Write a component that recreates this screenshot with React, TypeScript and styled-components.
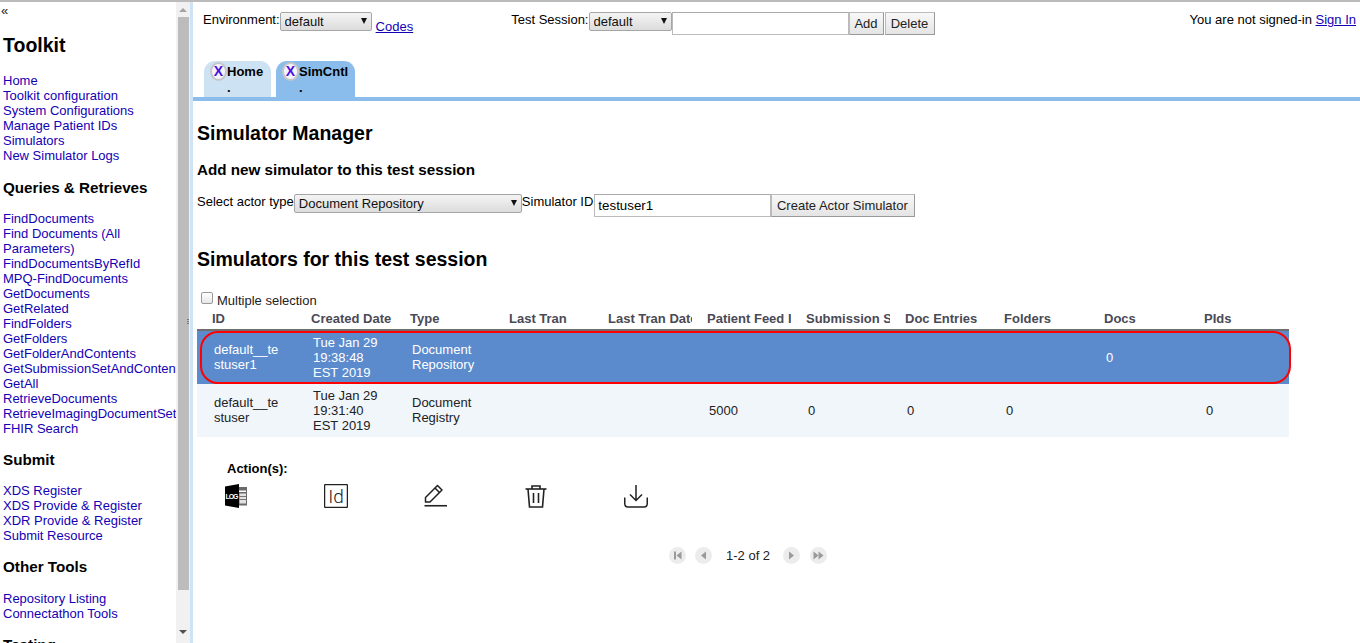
import React from "react";
import styled, { createGlobalStyle } from "styled-components";

const Global = createGlobalStyle`
  html, body { margin: 0; padding: 0; height: 100%; overflow: hidden; background: #fff; }
  body { font-family: "Liberation Sans", Arial, sans-serif; font-size: 13px; color: #000; }
  #root { height: 643px; }
`;

const Page = styled.div`
  display: flex;
  height: 643px;
  overflow: hidden;
  border-top: 2px solid #bbb;
  box-sizing: border-box;
`;

const Sidebar = styled.nav`
  width: 176px;
  flex: none;
  overflow: hidden;
  line-height: 15px;
`;

const Collapse = styled.div`
  height: 15px;
  margin-top: 1px;
  padding-left: 1px;
  font-size: 13px;
  line-height: 15px;
  color: #222;
`;

const SideTitle = styled.h2`
  margin: 16px 0 0 3px;
  font-size: 19.5px;
  line-height: 23px;
  font-weight: bold;
`;

const SideHeading = styled.h3<{ $top: number; $bottom: number }>`
  margin: ${(p) => p.$top}px 0 ${(p) => p.$bottom}px 3px;
  font-size: 15.21px;
  line-height: 17px;
  font-weight: bold;
`;

const SideList = styled.div<{ $first?: boolean }>`
  margin-top: ${(p) => (p.$first ? "16px" : "0")};
  padding-left: 3px;
  display: flex;
  flex-direction: column;
`;

const SideLink = styled.a`
  color: #1400b4;
  text-decoration: none;
  display: block;
`;

const ScrollTrack = styled.div`
  width: 14px;
  flex: none;
  background: #f1f1f1;
  display: flex;
  flex-direction: column;
  align-items: center;
`;

const ScrollUp = styled.div`
  width: 0;
  height: 0;
  margin-top: 6px;
  border-left: 4px solid transparent;
  border-right: 4px solid transparent;
  border-bottom: 4px solid #a3a3a3;
`;

const ScrollThumb = styled.div`
  width: 11px;
  height: 573px;
  margin-top: 5px;
  background: #bcbcbc;
`;

const ScrollDown = styled.div`
  width: 0;
  height: 0;
  margin-top: 40px;
  border-left: 4px solid transparent;
  border-right: 4px solid transparent;
  border-top: 4px solid #505050;
`;

const Splitter = styled.div`
  position: relative;
  width: 3px;
  flex: none;
  background: #cfe3f5;
`;

const Grip = styled.span`
  position: absolute;
  left: -3px;
  top: 317px;
  width: 2px;
  height: 6px;
  background: repeating-linear-gradient(#777 0 1px, transparent 1px 2px);
`;

const Main = styled.main`
  flex: 1;
  min-width: 0;
`;

const Toolbar = styled.div`
  display: flex;
  align-items: flex-start;
  height: 59px;
  padding: 10px 4px 0 10px;
  box-sizing: border-box;
`;

const ToolGroup = styled.div<{ $left?: number }>`
  display: flex;
  align-items: flex-start;
  margin-left: ${(p) => p.$left ?? 0}px;
`;

const UserGroup = styled.div`
  display: flex;
  align-items: flex-start;
  margin-left: auto;
`;

const Label = styled.span`
  line-height: 15px;
  white-space: nowrap;
`;

const SelectWrap = styled.div<{ $w: number }>`
  position: relative;
  width: ${(p) => p.$w}px;
  height: 19px;
  flex: none;
  &::after {
    content: "";
    position: absolute;
    right: 5px;
    top: 6px;
    border-left: 3.5px solid transparent;
    border-right: 3.5px solid transparent;
    border-top: 6px solid #111;
  }
`;

const Select = styled.select`
  appearance: none;
  width: 100%;
  height: 19px;
  margin: 0;
  padding: 0 0 0 4px;
  box-sizing: border-box;
  border: 1px solid #a6a6a6;
  border-radius: 2px;
  background: linear-gradient(#f4f4f4, #dcdcdc);
  font: 13px "Liberation Sans", Arial, sans-serif;
  color: #111;
`;

const CodesLink = styled.a`
  margin: 7px 0 0 4px;
  line-height: 15px;
  color: #1400b4;
  text-decoration: underline;
`;

const SignIn = styled.a`
  margin-left: 3.6px;
  color: #1400b4;
  text-decoration: underline;
  line-height: 15px;
`;

const TextInput = styled.input<{ $w: number; $gap?: number }>`
  width: ${(p) => p.$w}px;
  height: 23px;
  box-sizing: border-box;
  margin: 0 0 0 ${(p) => p.$gap ?? 0}px;
  padding: 1px 3px;
  border: 1px solid #bbb;
  border-top-color: #aaa;
  font: 13.33px "Liberation Sans", Arial, sans-serif;
  flex: none;
`;

const Btn = styled.button<{ $w: number; $gap?: number; $nudge?: number }>`
  width: ${(p) => p.$w}px;
  height: 23px;
  margin: 0 0 0 ${(p) => p.$gap ?? 0}px;
  padding: 0 ${(p) => p.$nudge ?? 0}px 0 0;
  flex: none;
  box-sizing: border-box;
  border: 1px solid #bbb;
  border-right-color: #999;
  border-bottom-color: #999;
  background: linear-gradient(#f8f8f8, #e4e4e4);
  font: 13px "Liberation Sans", Arial, sans-serif;
  color: #222;
`;

const TabBar = styled.div`
  display: flex;
  gap: 5px;
  height: 36px;
  padding-left: 11px;
  border-bottom: 4px solid #8bbdec;
`;

const Tab = styled.div<{ $active?: boolean; $w: number }>`
  width: ${(p) => p.$w}px;
  height: 36px;
  box-sizing: border-box;
  padding: 1px 0 0 6px;
  background: ${(p) => (p.$active ? "#8bbdec" : "#cde3f4")};
  border-radius: 11px 11px 0 0;
  font-weight: bold;
  line-height: 15px;
`;

const TabHead = styled.div`
  display: flex;
  align-items: flex-start;
  height: 19px;
`;

const TabClose = styled.span`
  width: 17px;
  height: 19px;
  flex: none;
  box-sizing: border-box;
  display: flex;
  align-items: center;
  justify-content: center;
  border: 2px solid #c6c6c6;
  border-radius: 50%;
  background: #f4f4fc;
  color: #4a10e0;
  font-size: 14px;
  font-weight: bold;
`;

const TabLabel = styled.span`
  margin-top: 2px;
`;

const TabDot = styled.div`
  margin-top: -1px;
  padding-left: 17px;
  line-height: 15px;
`;

const Content = styled.section`
  padding-left: 4px;
`;

const PageTitle = styled.h2`
  margin: 21px 0 0;
  font-size: 19.5px;
  line-height: 23px;
  font-weight: bold;
`;

const SubTitle = styled.h3`
  margin: 16px 0 0;
  font-size: 15.21px;
  line-height: 17px;
  font-weight: bold;
`;

const CreateRow = styled.div`
  display: flex;
  align-items: flex-start;
  margin-top: 16px;
`;

const SectionTitle = styled.h2`
  margin: 31px 0 0;
  font-size: 19.5px;
  line-height: 23px;
  font-weight: bold;
`;

const CheckRow = styled.label`
  display: flex;
  align-items: flex-start;
  margin-top: 21px;
  padding-left: 4px;
  height: 18px;
  color: #222;
  line-height: 15px;
`;

const Check = styled.span`
  width: 12px;
  height: 12px;
  flex: none;
  margin: 0 4px 0 0;
  box-sizing: border-box;
  border: 1px solid #999;
  border-radius: 2px;
  background: linear-gradient(#fff, #e6e6e6);
`;

const CheckText = styled.span`
  margin-top: 1px;
`;

const Table = styled.div`
  width: 1092px;
`;

const HeadRow = styled.div`
  display: grid;
  grid-template-columns: repeat(8, 99px) repeat(3, 100px);
  height: 19px;
`;

const HeadCell = styled.div`
  padding: 1px 0 0 15px;
  font-weight: bold;
  color: #4a4a55;
  line-height: 15px;
  white-space: nowrap;
  overflow: hidden;
`;

const Row = styled.div<{ $selected?: boolean }>`
  position: relative;
  display: grid;
  grid-template-columns: repeat(8, 99px) repeat(3, 100px);
  align-items: center;
  height: ${(p) => (p.$selected ? "55px" : "53px")};
  box-sizing: border-box;
  background: ${(p) => (p.$selected ? "#5b8bcd" : "#f1f6fb")};
  border-top: ${(p) => (p.$selected ? "2px solid #6f6f6f" : "0")};
  color: ${(p) => (p.$selected ? "#fff" : "#222")};
`;

const Cell = styled.div`
  padding: 0 16px 0 17px;
  line-height: 15px;
  overflow-wrap: anywhere;
  min-width: 0;
  &:nth-child(1), &:nth-child(3) {
    margin-bottom: 1px;
  }
`;

const Highlight = styled.span`
  position: absolute;
  left: 3px;
  right: -2px;
  top: 0;
  bottom: 0;
  box-sizing: border-box;
  border: 2px solid #f00;
  border-radius: 18px;
  pointer-events: none;
`;

const ActionsTitle = styled.div`
  margin: 24px 0 0 30px;
  font-weight: bold;
  line-height: 15px;
`;

const ActionIcons = styled.div`
  display: flex;
  gap: 76px;
  margin: 8px 0 0 27px;
`;

const IconBox = styled.svg`
  width: 24px;
  height: 24px;
  flex: none;
  display: block;
`;

const Pager = styled.div`
  display: flex;
  align-items: center;
  margin: 39px 0 0 472px;
  height: 17px;
`;

const PagerBtn = styled.span<{ $gap: number }>`
  width: 17px;
  height: 17px;
  flex: none;
  margin-left: ${(p) => p.$gap}px;
  display: flex;
  align-items: center;
  justify-content: center;
  border-radius: 50%;
  background: #ececec;
  color: #9a9a9a;
`;

const PagerText = styled.span`
  margin-left: 14px;
  color: #222;
`;

const sections = [
  { h: "Queries & Retrieves", top: 16, bottom: 15, items: ["FindDocuments", "Find Documents (All Parameters)", "FindDocumentsByRefId", "MPQ-FindDocuments", "GetDocuments", "GetRelated", "FindFolders", "GetFolders", "GetFolderAndContents", "GetSubmissionSetAndContents", "GetAll", "RetrieveDocuments", "RetrieveImagingDocumentSet", "FHIR Search"] },
  { h: "Submit", top: 15, bottom: 15, items: ["XDS Register", "XDS Provide & Register", "XDR Provide & Register", "Submit Resource"] },
  { h: "Other Tools", top: 15, bottom: 16, items: ["Repository Listing", "Connectathon Tools"] },
  { h: "Testing", top: 15, bottom: 15, items: [] as string[] },
];

const columns = ["ID", "Created Date", "Type", "Last Tran", "Last Tran Date", "Patient Feed I", "Submission S", "Doc Entries", "Folders", "Docs", "PIds"];

const rows = [
  { selected: true, cells: ["default__testuser1", "Tue Jan 29 19:38:48 EST 2019", "Document Repository", "", "", "", "", "", "", "0", ""] },
  { selected: false, cells: ["default__testuser", "Tue Jan 29 19:31:40 EST 2019", "Document Registry", "", "", "5000", "0", "0", "0", "", "0"] },
];

const Triangle = ({ dir }: { dir: "l" | "r" }) => (
  <path d={dir === "l" ? "M0 4 L5 0 V8 Z" : "M0 0 L5 4 L0 8 Z"} fill="currentColor" />
);

const PagerIcon = ({ kind }: { kind: "first" | "prev" | "next" | "last" }) => (
  <svg width="11" height="9" viewBox="0 0 11 9">
    {kind === "first" && (
      <g transform="translate(2 0.5)">
        <rect x="0" y="0" width="2" height="8" fill="currentColor" />
        <g transform="translate(2.5 0)"><Triangle dir="l" /></g>
      </g>
    )}
    {kind === "prev" && <g transform="translate(3 0.5)"><Triangle dir="l" /></g>}
    {kind === "next" && <g transform="translate(3 0.5)"><Triangle dir="r" /></g>}
    {kind === "last" && (
      <g transform="translate(0.5 0.5)">
        <Triangle dir="r" />
        <g transform="translate(5 0)"><Triangle dir="r" /></g>
      </g>
    )}
  </svg>
);

const LogIcon = () => (
  <IconBox viewBox="0 0 24 24">
    <path d="M1 2.5 L15 0 V24 L1 21.5 Z" fill="#000" />
    <rect x="15" y="3" width="8" height="18.5" fill="#6a6a6a" />
    <rect x="15" y="6.5" width="7" height="1.5" fill="#fff" />
    <rect x="15.5" y="9.5" width="6.5" height="10" fill="#e2e2e2" />
    <path d="M15.5 12.5h6.5M15.5 15.5h6.5" stroke="#777" strokeWidth="1" />
    <text x="1.5" y="14.5" fontSize="7" fontWeight="bold" fill="#fff" fontFamily="Liberation Sans" textLength="13">LOG</text>
  </IconBox>
);

const IdIcon = () => (
  <IconBox viewBox="0 0 24 24">
    <rect x="0.6" y="0.6" width="22.8" height="22.8" rx="1" fill="none" stroke="#222" strokeWidth="1.3" />
    <text x="12" y="18.5" textAnchor="middle" fontSize="19" fontWeight="300" fill="#222" fontFamily="Roboto">Id</text>
  </IconBox>
);

const PencilIcon = () => (
  <IconBox viewBox="0 0 24 24" fill="none" stroke="#222" strokeWidth="1.5">
    <path d="M1.5 18 V13.5 L13.5 1.5 L18 6 L6 18 Z" strokeLinejoin="round" />
    <path d="M11 4 L15.5 8.5" />
    <path d="M0.5 21.75 H23" strokeWidth="1.6" />
  </IconBox>
);

const TrashIcon = () => (
  <IconBox viewBox="0 0 24 24" fill="none" stroke="#222" strokeWidth="1.6">
    <path d="M1.5 5 H22.5" />
    <path d="M8 5 V2 H16 V5" />
    <path d="M4 5 L5.5 23 H18.5 L20 5" />
    <path d="M9.5 9 V19 M14.5 9 V19" />
  </IconBox>
);

const DownloadIcon = () => (
  <IconBox viewBox="0 0 24 24" fill="none" stroke="#222" strokeWidth="1.5">
    <path d="M12 1 V16 M6 10.5 L12 16.5 L18 10.5" />
    <path d="M0.75 13.5 V19.5 Q0.75 23 4 23 H20 Q23.25 23 23.25 19.5 V13.5" />
  </IconBox>
);

export default function App() {
  return (
    <>
      <Global />
      <Page>
        <Sidebar>
          <Collapse>«</Collapse>
          <SideTitle>Toolkit</SideTitle>
          <SideList $first>
            {["Home", "Toolkit configuration", "System Configurations", "Manage Patient IDs", "Simulators", "New Simulator Logs"].map((t) => (
              <SideLink key={t}>{t}</SideLink>
            ))}
          </SideList>
          {sections.map((s) => (
            <React.Fragment key={s.h}>
              <SideHeading $top={s.top} $bottom={s.bottom}>{s.h}</SideHeading>
              <SideList>
                {s.items.map((t) => (
                  <SideLink key={t}>{t}</SideLink>
                ))}
              </SideList>
            </React.Fragment>
          ))}
        </Sidebar>
        <ScrollTrack>
          <ScrollUp />
          <ScrollThumb />
          <ScrollDown />
        </ScrollTrack>
        <Splitter><Grip /></Splitter>
        <Main>
          <Toolbar>
            <ToolGroup>
              <Label>Environment:</Label>
              <SelectWrap $w={92}>
                <Select defaultValue="default"><option>default</option></Select>
              </SelectWrap>
              <CodesLink>Codes</CodesLink>
            </ToolGroup>
            <ToolGroup $left={98}>
              <Label>Test Session:</Label>
              <SelectWrap $w={83}>
                <Select defaultValue="default"><option>default</option></Select>
              </SelectWrap>
              <TextInput $w={177} />
              <Btn $w={35}>Add</Btn>
              <Btn $w={50} $gap={1}>Delete</Btn>
            </ToolGroup>
            <UserGroup>
              <Label>You are not signed-in</Label>
              <SignIn>Sign In</SignIn>
            </UserGroup>
          </Toolbar>
          <TabBar>
            <Tab $w={67}>
              <TabHead><TabClose>X</TabClose><TabLabel>Home</TabLabel></TabHead>
              <TabDot>.</TabDot>
            </Tab>
            <Tab $w={79} $active>
              <TabHead><TabClose>X</TabClose><TabLabel>SimCntl</TabLabel></TabHead>
              <TabDot>.</TabDot>
            </Tab>
          </TabBar>
          <Content>
            <PageTitle>Simulator Manager</PageTitle>
            <SubTitle>Add new simulator to this test session</SubTitle>
            <CreateRow>
              <Label>Select actor type</Label>
              <SelectWrap $w={228}>
                <Select defaultValue="Document Repository"><option>Document Repository</option></Select>
              </SelectWrap>
              <Label>Simulator ID</Label>
              <TextInput $w={177} $gap={1} defaultValue="testuser1" />
              <Btn $w={144} $nudge={2}>Create Actor Simulator</Btn>
            </CreateRow>
            <SectionTitle>Simulators for this test session</SectionTitle>
            <CheckRow>
              <Check />
              <CheckText>Multiple selection</CheckText>
            </CheckRow>
            <Table>
              <HeadRow>
                {columns.map((c) => <HeadCell key={c}>{c}</HeadCell>)}
              </HeadRow>
              {rows.map((r, i) => (
                <Row key={i} $selected={r.selected}>
                  {r.cells.map((c, j) => <Cell key={j}>{c}</Cell>)}
                  {r.selected && <Highlight />}
                </Row>
              ))}
            </Table>
            <ActionsTitle>Action(s):</ActionsTitle>
            <ActionIcons>
              <LogIcon />
              <IdIcon />
              <PencilIcon />
              <TrashIcon />
              <DownloadIcon />
            </ActionIcons>
            <Pager>
              <PagerBtn $gap={0}><PagerIcon kind="first" /></PagerBtn>
              <PagerBtn $gap={9}><PagerIcon kind="prev" /></PagerBtn>
              <PagerText>1-2 of 2</PagerText>
              <PagerBtn $gap={13}><PagerIcon kind="next" /></PagerBtn>
              <PagerBtn $gap={10}><PagerIcon kind="last" /></PagerBtn>
            </Pager>
          </Content>
        </Main>
      </Page>
    </>
  );
}
